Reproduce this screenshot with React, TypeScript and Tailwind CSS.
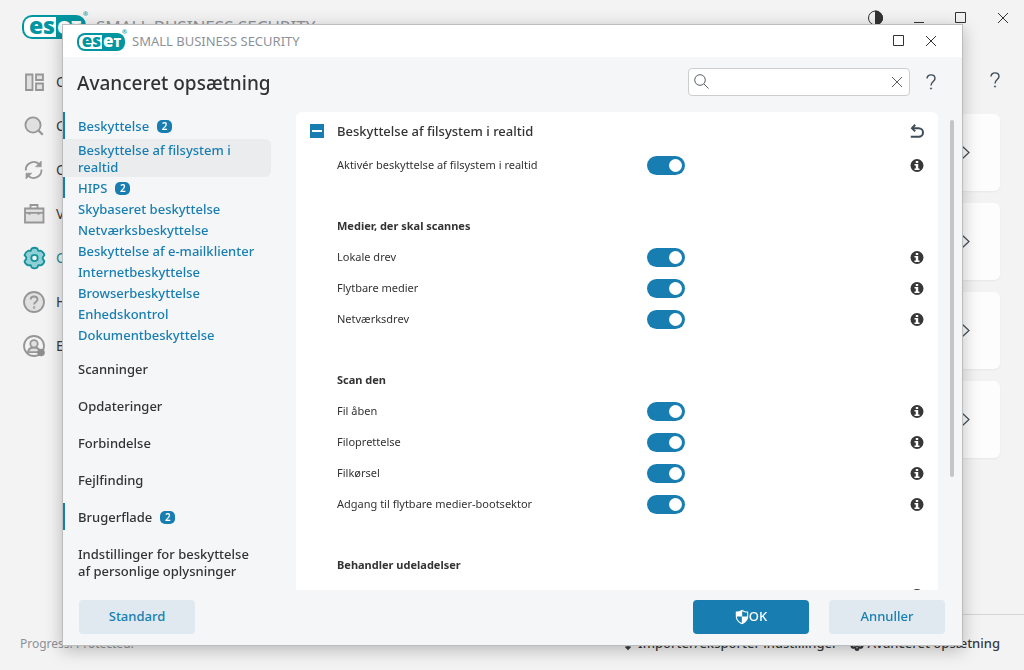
import React, { useState } from 'react';
import { Settings } from 'lucide-react';

interface NavItem {
    label: string;
    count?: number;
    selected?: boolean;
}

interface SettingGroup {
    title?: string;
    settings: string[];
}

const protectionItems: NavItem[] = [
    { label: 'Beskyttelse af filsystem i realtid', selected: true },
    { label: 'HIPS', count: 2 },
    { label: 'Skybaseret beskyttelse' },
    { label: 'Netværksbeskyttelse' },
    { label: 'Beskyttelse af e-mailklienter' },
    { label: 'Internetbeskyttelse' },
    { label: 'Browserbeskyttelse' },
    { label: 'Enhedskontrol' },
    { label: 'Dokumentbeskyttelse' },
];

const sections: NavItem[] = [
    { label: 'Scanninger' },
    { label: 'Opdateringer' },
    { label: 'Forbindelse' },
    { label: 'Fejlfinding' },
    { label: 'Brugerflade', count: 2 },
    { label: 'Indstillinger for beskyttelse af personlige oplysninger' },
];

const groups: SettingGroup[] = [
    { settings: ['Aktivér beskyttelse af filsystem i realtid'] },
    { title: 'Medier, der skal scannes', settings: ['Lokale drev', 'Flytbare medier', 'Netværksdrev'] },
    {
        title: 'Scan den',
        settings: ['Fil åben', 'Filoprettelse', 'Filkørsel', 'Adgang til flytbare medier-bootsektor'],
    },
    { title: 'Behandler udeladelser', settings: [] },
];

function Logo({ large }: { large?: boolean }) {
    return (
        <span
            className={
                large
                    ? "relative flex h-6 w-16 rounded-[10px] bg-[#0096a1] p-0.5 font-['Open_Sans',sans-serif] text-[23px] leading-[16px] font-extrabold"
                    : "relative flex h-[18px] w-12 rounded-[8px] bg-[#0096a1] p-0.5 font-['Open_Sans',sans-serif] text-[17px] leading-[11px] font-extrabold"
            }
        >
            <span
                className={
                    large
                        ? 'w-8 rounded-l-[8px] bg-white pr-px text-right text-[#0096a1]'
                        : 'w-[23px] rounded-l-[6px] bg-white pr-px text-right text-[#0096a1]'
                }
            >
                es
            </span>
            <span className="flex items-baseline pl-px text-white">
                e<span className={large ? 'text-[17px]' : 'text-[13px]'}>T</span>
            </span>
            <span className="absolute -top-1 -right-0.5 text-[6px] leading-[6px] font-bold text-[#0096a1]">®</span>
        </span>
    );
}

function CloseIcon() {
    return (
        <svg width="12" height="12" viewBox="0 0 12 12" stroke="currentColor">
            <path d="M1 1l10 10M11 1L1 11" />
        </svg>
    );
}

function MaximizeIcon() {
    return (
        <svg width="12" height="12" viewBox="0 0 12 12" fill="none" stroke="currentColor">
            <path d="M.5.5h10v10H.5z" />
        </svg>
    );
}

function HelpIcon() {
    return (
        <svg width="10" height="16" viewBox="0 0 10 16" fill="none" stroke="#3f4c56" strokeWidth="1.4">
            <path d="M1 4.6C1 2.3 2.7.9 5 .9s4 1.4 4 3.6C9 7.4 5 7.6 5 11.4" />
            <circle cx="5" cy="14.5" r=".8" fill="#3f4c56" strokeWidth=".4" />
        </svg>
    );
}

function InfoIcon() {
    return (
        <svg width="14" height="13" viewBox="0 0 14 13">
            <circle cx="7" cy="6.5" r="6.5" fill="#373737" />
            <path d="M5.800 1.900h2.400v2H5.800zM4.500 4.900h3.700v4.500h1.300v1.500h-5V9.400h1.300v-3H4.500z" fill="#fff" />
        </svg>
    );
}

function ShieldIcon() {
    return (
        <svg width="14" height="16" viewBox="0 0 14 16">
            <path
                d="M7 .7C5.2 2 3 2.6.8 2.6v4.6c0 3.6 2.4 6.4 6.2 8 3.8-1.6 6.2-4.4 6.2-8V2.6C11 2.6 8.8 2 7 .7z"
                fill="#fff"
            />
            <path d="M7.200 2.200c1.500.9 3.200 1.300 5 1.400v3.900h-5zM1.800 7.500h5v6.500c-3-1.400-4.800-3.600-5-6.500z" fill="#187eb1" />
        </svg>
    );
}

const navIcon = {
    width: 24,
    height: 24,
    viewBox: '0 0 24 24',
    fill: '#e0e0e0',
    stroke: '#969696',
    strokeWidth: 1.8,
};

const appNav = [
    {
        label: 'Oversigt',
        icon: (
            <svg {...navIcon}>
                <path d="M4 4.500h6.500v15.500H4zM14 4.500h7v5.500h-7zM14 13.500h7v6.500h-7z" />
            </svg>
        ),
    },
    {
        label: 'Computerscanning',
        icon: (
            <svg {...navIcon}>
                <circle cx="11" cy="11" r="7.600" />
                <path d="M16.600 16.600l4.200 4.200" strokeWidth="2.200" />
            </svg>
        ),
    },
    {
        label: 'Opdatering',
        icon: (
            <svg {...navIcon} fill="none">
                <path d="M3.800 12.500A8 8 0 0 1 17.800 6.800M19.500 11.500A8 8 0 0 1 5.500 17.200" />
                <path d="M19.300 3v5.800h-5.800zM4 21v-5.800h5.800z" fill="#969696" strokeWidth=".6" />
            </svg>
        ),
    },
    {
        label: 'Værktøjer',
        icon: (
            <svg {...navIcon}>
                <path d="M8.500 6.500V3h7v3.500" fill="none" />
                <path d="M3 6.500h18.500V20.500H3zM3 10.800h18.500M7.500 10.800v2M16.500 10.800v2" />
            </svg>
        ),
    },
    {
        label: 'Opsætning',
        active: true,
        icon: (
            <svg {...navIcon} fill="#8fd0d6" stroke="#16919a">
                <path
                    strokeLinejoin="round"
                    d="M9.600 2.600Q12.500.9 15.400 2.600L16.300 4.900L18.800 4.700Q22 6.300 22.400 9.200L20.800 11.200V13.200L22.400 15.100Q21.800 18.300 18.800 19.400L16.300 19.200L15.400 21.500Q12.500 23.200 9.600 21.500L8.700 19.200L6.200 19.400Q3.100 18.300 2.500 15.100L4.200 13.200V11.200L2.500 9.200Q3.100 6.200 6.200 4.700L8.700 4.900Z"
                />
                <circle cx="12.500" cy="12" r="3.200" fill="#f3f3f3" />
            </svg>
        ),
    },
    {
        label: 'Hjælp og support',
        icon: (
            <svg {...navIcon}>
                <circle cx="12" cy="12" r="10" />
                <path d="M8.700 9.600c0-2 1.500-3.100 3.400-3.100s3.400 1.100 3.400 3c0 2.300-3.400 2.600-3.400 5" fill="none" />
                <circle cx="12.100" cy="17.500" r=".4" />
            </svg>
        ),
    },
    {
        label: 'ESET HOME-konto',
        icon: (
            <svg {...navIcon}>
                <circle cx="12" cy="12" r="10" fill="#f3f3f3" />
                <path d="M6 18.200c.4-3 2.600-4.700 6-4.700s5.600 1.700 6 4.700z" />
                <circle cx="12" cy="9.800" r="3.700" />
                <circle cx="19" cy="18.500" r="3.800" fill="#8e8e8e" stroke="none" />
            </svg>
        ),
    },
];

function Badge({ count }: { count: number }) {
    return (
        <span className="ml-2 inline-block h-[13px] w-[15px] rounded-[5px] bg-[#187eb1] text-center text-[10px] leading-[13px] font-semibold text-white">
            {count}
        </span>
    );
}

function Toggle({ id }: { id: string }) {
    const [on, setOn] = useState(true);

    return (
        <input
            id={id}
            type="checkbox"
            role="switch"
            checked={on}
            onChange={(e) => setOn(e.target.checked)}
            className="flex h-[19px] w-[38px] shrink-0 appearance-none items-center rounded-full bg-gray-400 px-[3px] before:size-[13px] before:rounded-full before:bg-white checked:justify-end checked:bg-[#187eb1]"
        />
    );
}

function SettingRow({ label, id }: { label: string; id: string }) {
    return (
        <div className="flex h-[31px] items-center pr-3.5 pl-[41px]">
            <label htmlFor={id} className="w-[310px] shrink-0">
                {label}
            </label>
            <Toggle id={id} />
            <button aria-label={`Info om ${label}`} className="ml-auto">
                <InfoIcon />
            </button>
        </div>
    );
}

function MainWindow() {
    return (
        <div className="flex min-h-screen flex-col">
            <header className="flex h-[60px] items-start justify-between pr-[15px] pl-[22px]">
                <div className="flex items-center gap-2.5 pt-[15px]">
                    <Logo large />
                    <span className="text-[17px] leading-6 text-[#8d9298]">SMALL BUSINESS SECURITY</span>
                </div>
                <div className="flex items-center gap-[30px] pt-2.5 text-[#333]">
                    <button aria-label="Kontrast">
                        <svg width="15" height="16" viewBox="0 0 15 16" fill="none" stroke="#333">
                            <circle cx="7.500" cy="8" r="7" />
                            <path d="M7.500 1a7 7 0 0 1 0 14z" fill="#333" />
                        </svg>
                    </button>
                    <button aria-label="Minimer">
                        <svg width="12" height="12" viewBox="0 0 12 12" stroke="currentColor">
                            <path d="M1 10.500h10" />
                        </svg>
                    </button>
                    <button aria-label="Maksimer">
                        <MaximizeIcon />
                    </button>
                    <button aria-label="Luk">
                        <CloseIcon />
                    </button>
                </div>
            </header>

            <div className="flex flex-1">
                <nav className="flex w-[230px] shrink-0 flex-col pl-[22px]">
                    {appNav.map((item) => (
                        <a
                            key={item.label}
                            href="#"
                            className={
                                item.active
                                    ? 'flex h-11 items-center gap-2.5 text-sm text-[#16919a]'
                                    : 'flex h-11 items-center gap-2.5 text-sm text-[#3c3c3c]'
                            }
                        >
                            {item.icon}
                            {item.label}
                        </a>
                    ))}
                </nav>
                <main className="flex-1 pr-6">
                    <div className="flex h-[54px] items-start justify-end pt-3">
                        <button aria-label="Hjælp">
                            <HelpIcon />
                        </button>
                    </div>
                    <div className="flex flex-col gap-3">
                        {[0, 1, 2, 3].map((i) => (
                            <a
                                key={i}
                                href="#"
                                aria-label="Åbn"
                                className="flex h-[77px] items-center justify-end rounded-md bg-[#fdfdfd] pr-[30px] shadow-xs"
                            >
                                <svg width="9" height="15" viewBox="0 0 9 15" fill="none" stroke="#3f4c56" strokeWidth="1.200">
                                    <path d="M1 1l7 6.500-7 6.500" />
                                </svg>
                            </a>
                        ))}
                    </div>
                </main>
            </div>

            <footer className="flex h-14 items-center">
                <span className="w-[230px] pt-1 pl-5 text-xs text-[#8d9298]">Progress. Protected.</span>
                <div className="flex h-full flex-1 items-center justify-end gap-3 border-t border-[#d4d4d4] pt-0.5 pr-6 text-[13px] font-medium text-[#35393d]">
                    <button className="flex items-center gap-1">
                        <svg width="12" height="14" viewBox="0 0 12 14" fill="none" stroke="currentColor" strokeWidth="1.600">
                            <path d="M6 1v11M3.500 9.500L6 12l2.500-2.500" />
                        </svg>
                        Importer/eksporter indstillinger
                    </button>
                    <button className="flex items-center gap-1">
                        <Settings size={14} strokeWidth={4} />
                        Avanceret opsætning
                    </button>
                </div>
            </footer>
        </div>
    );
}

function Sidebar() {
    return (
        <nav className="w-[233px] shrink-0 overflow-hidden pr-[25px] text-[13px] leading-[17px] font-medium text-[#333]">
            <a href="#" className="flex items-center border-l-2 border-[#187eb1] pt-1.5 pb-1 pl-[13px] text-[#187eb1]">
                Beskyttelse
                <Badge count={2} />
            </a>
            <ul className="text-[#187eb1]">
                {protectionItems.map((item) => (
                    <li key={item.label} className={item.selected ? 'rounded-r-md bg-[#ebeced]' : ''}>
                        <a
                            href="#"
                            className={
                                item.count
                                    ? 'flex items-center border-l-2 border-[#187eb1] pt-[3px] pb-px pl-[13px]'
                                    : 'block pt-[3px] pr-3 pb-px pl-[15px]'
                            }
                        >
                            {item.label}
                            {item.count && <Badge count={item.count} />}
                        </a>
                    </li>
                ))}
            </ul>
            <ul className="flex flex-col gap-2.5 pt-2.5">
                {sections.map((item) => (
                    <li key={item.label}>
                        <a
                            href="#"
                            className={
                                item.count
                                    ? 'flex items-center border-l-2 border-[#187eb1] pt-1.5 pb-1 pl-[13px]'
                                    : 'block pt-1.5 pr-3 pb-1 pl-[15px]'
                            }
                        >
                            {item.label}
                            {item.count && <Badge count={item.count} />}
                        </a>
                    </li>
                ))}
            </ul>
        </nav>
    );
}

function AdvancedSetup() {
    const [query, setQuery] = useState('');

    return (
        <section
            role="dialog"
            aria-label="Avanceret opsætning"
            className="flex h-full flex-col border border-[#bcbdbe] bg-[#f5f6f8] shadow-[0_4px_16px_rgba(0,0,0,0.25)]"
        >
            <header className="flex h-8 shrink-0 items-center justify-between bg-white pr-[25px] pl-3.5">
                <div className="flex items-center gap-[7px] pt-0.5">
                    <Logo />
                    <span className="text-[13px] text-[#8d9298]">SMALL BUSINESS SECURITY</span>
                </div>
                <div className="flex items-center gap-5 text-[#333]">
                    <button aria-label="Maksimer">
                        <MaximizeIcon />
                    </button>
                    <button aria-label="Luk">
                        <CloseIcon />
                    </button>
                </div>
            </header>

            <div className="flex h-[55px] shrink-0 items-center justify-between pr-[26px] pb-1.5 pl-3.5">
                <h1 className="pt-1 text-[19px] font-medium text-[#333]">Avanceret opsætning</h1>
                <div className="flex items-center gap-4">
                    <div className="flex h-7 w-[222px] items-center rounded border border-[#cbcdcf] bg-white px-[5px] text-[#5a5f64]">
                        <svg width="15" height="15" viewBox="0 0 15 15" fill="none" stroke="currentColor">
                            <circle cx="6" cy="6" r="5.300" />
                            <path d="M10 10l4.500 4.500" />
                        </svg>
                        <input
                            type="text"
                            aria-label="Søg"
                            value={query}
                            onChange={(e) => setQuery(e.target.value)}
                            className="min-w-0 flex-1 px-2 text-xs outline-none"
                        />
                        <button aria-label="Ryd" className="pr-px" onClick={() => setQuery('')}>
                            <CloseIcon />
                        </button>
                    </div>
                    <button aria-label="Hjælp">
                        <HelpIcon />
                    </button>
                </div>
            </div>

            <div className="flex min-h-0 flex-1">
                <Sidebar />
                <main className="min-w-0 flex-1 overflow-hidden rounded-t-md bg-white text-[11px] text-[#333]">
                    <div className="flex h-[38px] items-center px-3.5">
                        <button aria-label="Skjul" className="flex size-3.5 items-center justify-center bg-[#187eb1]">
                            <span className="h-0.5 w-2.5 bg-white" />
                        </button>
                        <h2 className="ml-[13px] pt-0.5 text-[13px] font-medium">Beskyttelse af filsystem i realtid</h2>
                        <button aria-label="Gendan" className="ml-auto">
                            <svg width="14" height="14" viewBox="0 0 14 14" fill="none" stroke="#3f4c56" strokeWidth="2">
                                <path d="M2 4.200h6.700a4.200 4.200 0 0 1 0 8.600H.8" />
                                <path d="M5.200.8L2 4.200l3.200 3.200" />
                            </svg>
                        </button>
                    </div>
                    <div className="flex flex-col gap-[30px]">
                        {groups.map((group, g) => (
                            <div key={g}>
                                {group.title && (
                                    <h3 className="flex h-[31px] items-center pl-[41px] font-bold">{group.title}</h3>
                                )}
                                {group.settings.map((label, i) => (
                                    <SettingRow key={label} id={`setting-${g}-${i}`} label={label} />
                                ))}
                                {group.settings.length === 0 && (
                                    <div className="flex h-[29px] items-center justify-end px-3.5">
                                        <button aria-label={`Info om ${group.title}`}>
                                            <InfoIcon />
                                        </button>
                                    </div>
                                )}
                            </div>
                        ))}
                    </div>
                </main>
                <div className="w-6 shrink-0 pt-2 pl-3">
                    <div className="h-[76%] w-1 rounded-full bg-[#c3c5c7]" />
                </div>
            </div>

            <footer className="flex h-[55px] shrink-0 items-start gap-5 pt-2.5 pr-[17px] pl-4 text-[13px] font-medium">
                <button className="mr-auto h-[34px] w-[116px] rounded bg-[#dfe9ef] text-[#187eb1]">Standard</button>
                <button className="flex h-[34px] w-[116px] items-center justify-center rounded bg-[#187eb1] text-white">
                    <ShieldIcon />
                    OK
                </button>
                <button className="h-[34px] w-[116px] rounded bg-[#dfe9ef] text-[#187eb1]">Annuller</button>
            </footer>
        </section>
    );
}

export default function App() {
    return (
        <div className="bg-[#f3f3f3] font-['Noto_Sans',sans-serif]">
            <MainWindow />
            <div className="fixed inset-0 py-6 pr-[61px] pl-[62px]">
                <AdvancedSetup />
            </div>
        </div>
    );
}
